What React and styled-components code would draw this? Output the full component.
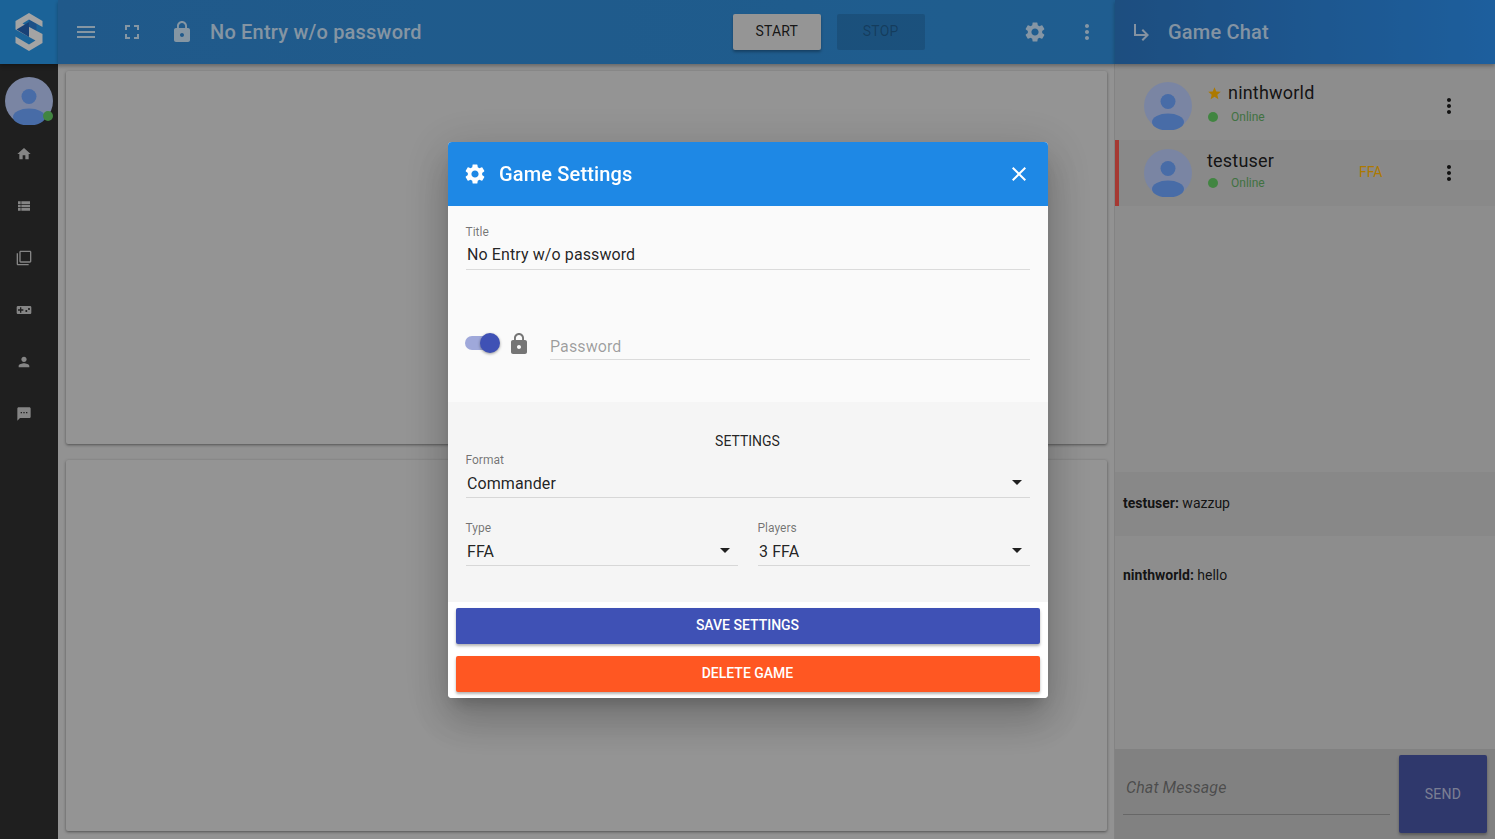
import React from "react";
import styled, { createGlobalStyle } from "styled-components";
import {
  MdMenu, MdFullscreen, MdLock, MdSettings, MdMoreVert, MdSubdirectoryArrowRight, MdClose,
  MdHome, MdViewList, MdFilterNone, MdVideogameAsset, MdPerson, MdSms, MdStar, MdArrowDropDown,
} from "react-icons/md";

const Global = createGlobalStyle`
  html, body { margin: 0; height: 100%; overflow: hidden; }
  body { font-family: Roboto, "Liberation Sans", sans-serif; background: #d7d7d7; color: rgba(0,0,0,.87); }
  * { box-sizing: border-box; }
`;

const Shell = styled.div`
  display: grid;
  grid-template-columns: 58px 1fr 380px;
  grid-template-rows: 64px 1fr;
  height: 100vh;
`;

const LogoCell = styled.div`
  background: #2993e1;
  display: flex;
  align-items: center;
  justify-content: center;
  box-shadow: 0 2px 4px rgba(0,0,0,.3);
  z-index: 2;
`;

const TopBar = styled.header`
  background: linear-gradient(90deg, #3084cc 0%, #2f88d0 70%, #2f8ad4 100%);
  color: #fff;
  display: flex;
  align-items: center;
  box-shadow: 0 2px 4px rgba(0,0,0,.3);
  z-index: 2;
`;

const ChatBar = styled.header`
  background: linear-gradient(90deg, #2b73bc 0%, #2b8ce8 100%);
  color: #fff;
  display: flex;
  align-items: center;
  padding-left: 15px;
  box-shadow: 0 2px 4px rgba(0,0,0,.3);
  z-index: 2;
`;

const BarIcon = styled.span`
  display: flex;
  align-items: center;
  justify-content: center;
  width: 24px;
  margin-left: ${p => p.$ml || 0}px;
  font-size: 24px;
  color: rgba(255,255,255,.72);
`;

const BarTitle = styled.span`
  font-size: 20px;
  font-weight: 500;
  line-height: 24px;
  letter-spacing: .2px;
  margin-left: ${p => p.$ml}px;
  color: rgba(255,255,255,.72);
`;

const ActionBtn = styled.div`
  width: 88px;
  height: 36px;
  border-radius: 2px;
  display: flex;
  align-items: center;
  justify-content: center;
  padding-bottom: 2px;
  font-size: 14px;
  font-weight: 400;
  letter-spacing: .2px;
  margin-left: ${p => p.$ml}px;
  background: ${p => (p.$off ? "rgba(0,0,0,.12)" : "#dcdcdc")};
  color: ${p => (p.$off ? "rgba(0,0,0,.26)" : "rgba(0,0,0,.87)")};
  box-shadow: ${p => (p.$off ? "none" : "0 2px 3px rgba(0,0,0,.3)")};
`;

const Rail = styled.nav`
  background: #2e2e2e;
  display: flex;
  flex-direction: column;
  align-items: center;
  padding-top: 13px;
`;

const RailAvatar = styled.div`
  position: relative;
  width: 48px;
  height: 48px;
  margin-bottom: 3px;
`;

const StatusBadge = styled.span`
  position: absolute;
  right: 0;
  bottom: 4px;
  width: 10px;
  height: 10px;
  border-radius: 50%;
  background: #61c461;
`;

const RailItem = styled.div`
  height: 52px;
  width: 100%;
  display: flex;
  align-items: center;
  justify-content: center;
  padding-right: 10px;
  font-size: 16px;
  color: #c4c4c4;
`;

const Main = styled.main`
  padding: 7px 7px 8px 8px;
  display: grid;
  grid-template-rows: 373px 1fr;
  gap: 16px;
  border-right: 1px solid rgba(0,0,0,.1);
  min-height: 0;
`;

const Card = styled.section`
  background: #dadada;
  border-radius: 2px;
  box-shadow: 0 1px 3px rgba(0,0,0,.45);
`;

const ChatSide = styled.aside`
  display: flex;
  flex-direction: column;
  min-height: 0;
  background: #d0d0d0;
`;

const UserList = styled.div`
  height: 408px;
  flex: none;
`;

const UserRow = styled.div`
  height: ${p => p.$h}px;
  display: flex;
  align-items: center;
  padding-left: ${p => (p.$active ? 25 : 29)}px;
  padding-top: ${p => p.$pt || 0}px;
  border-left: ${p => (p.$active ? "4px solid #f5544c" : "none")};
  background: ${p => (p.$active ? "#cacaca" : "transparent")};
`;

const UserInfo = styled.div`
  margin-left: 15px;
  margin-bottom: 6px;
  width: 152px;
  display: flex;
  flex-direction: column;
`;

const UserName = styled.div`
  display: flex;
  align-items: center;
  font-size: 18px;
  line-height: 22px;
  letter-spacing: .2px;
  color: rgba(0,0,0,.87);
  svg { color: #ffb300; font-size: 15px; margin-right: 6px; }
`;

const UserState = styled.div`
  display: flex;
  align-items: center;
  font-size: 12px;
  line-height: 14px;
  padding-left: 1px;
  margin-top: ${p => p.$mt}px;
  color: #5fa862;
  &::before {
    content: "";
    width: 10px;
    height: 10px;
    border-radius: 50%;
    background: #61c461;
    margin-right: 13px;
  }
`;

const FfaTag = styled.span`
  font-size: 14px;
  color: #ffb300;
  width: 24px;
  white-space: nowrap;
  margin-bottom: 2px;
`;

const RowMenu = styled.span`
  display: flex;
  font-size: 24px;
  color: rgba(0,0,0,.87);
  margin-left: ${p => p.$ml}px;
`;

const Messages = styled.div`
  flex: 1;
  min-height: 0;
`;

const Message = styled.div`
  height: ${p => p.$h}px;
  padding: ${p => p.$pt}px 8px 0;
  font-size: 14px;
  line-height: 20px;
  color: rgba(0,0,0,.87);
  background: ${p => (p.$shade ? "#c9c9c9" : "transparent")};
  b { font-weight: 700; }
`;

const Composer = styled.div`
  height: 90px;
  background: #bebebe;
  display: flex;
  padding: 6px 8px;
  gap: 9px;
`;

const ChatInput = styled.div`
  flex: 1;
  height: 60px;
  padding: 23px 3px 0;
  border-bottom: 1px solid rgba(0,0,0,.2);
  font-size: 16px;
  line-height: 20px;
  letter-spacing: .1px;
  font-style: italic;
  color: rgba(0,0,0,.42);
`;

const SendBtn = styled.div`
  width: 88px;
  height: 78px;
  border-radius: 2px;
  background: #46539f;
  color: rgba(255,255,255,.62);
  display: flex;
  align-items: center;
  justify-content: center;
  font-size: 14px;
  font-weight: 400;
  letter-spacing: .3px;
  padding-bottom: 1px;
  box-shadow: 0 2px 3px rgba(0,0,0,.3);
`;

const Backdrop = styled.div`
  position: fixed;
  inset: 0;
  z-index: 10;
  background: rgba(0,0,0,.32);
  display: flex;
  align-items: center;
  justify-content: center;
`;

const Dialog = styled.div`
  width: 600px;
  height: 556px;
  border-radius: 4px;
  overflow: hidden;
  background: #fff;
  display: flex;
  flex-direction: column;
  box-shadow: 0 11px 15px -7px rgba(0,0,0,.2), 0 24px 38px 3px rgba(0,0,0,.14), 0 9px 46px 8px rgba(0,0,0,.12);
`;

const DialogHead = styled.div`
  height: 64px;
  flex: none;
  background: #1e88e5;
  color: #fff;
  display: flex;
  align-items: center;
  padding: 0 16.5px 0 15.5px;
  font-size: 20px;
  font-weight: 500;
  letter-spacing: .15px;
  svg { font-size: 24px; }
  span { margin-left: 12px; flex: 1; }
`;

const DialogTop = styled.div`
  height: 196px;
  flex: none;
  background: #fafafa;
  padding: 19px 18px 0;
`;

const DialogMid = styled.div`
  height: 200px;
  flex: none;
  background: #f5f5f5;
  padding: 29px 18px 0;
`;

const SectionLabel = styled.div`
  text-align: center;
  font-size: 14px;
  line-height: 20px;
  height: 22px;
  color: rgba(0,0,0,.87);
`;

const FieldWrap = styled.div`
  flex: ${p => p.$flex || "none"};
  min-width: 0;
  margin-top: ${p => p.$mt || 0}px;
  margin-left: ${p => p.$ml || 0}px;
`;

const FieldLabel = styled.div`
  font-size: 12px;
  line-height: 14px;
  color: rgba(0,0,0,.54);
`;

const FieldValue = styled.div`
  height: 31px;
  display: flex;
  align-items: center;
  justify-content: space-between;
  padding: ${p => (p.$ph ? "6px 0 0 .5px" : p.$sel ? "4px 1.5px 0" : "2px 1.5px 0")};
  font-size: 16px;
  letter-spacing: .1px;
  color: ${p => (p.$ph ? "rgba(0,0,0,.38)" : "rgba(0,0,0,.87)")};
  border-bottom: 1px solid rgba(0,0,0,.12);
  svg { font-size: 24px; color: rgba(0,0,0,.87); margin: -4px -1px 0 0; }
`;

const PassRow = styled.div`
  display: flex;
  align-items: flex-end;
  margin-top: 59px;
`;

const Toggle = styled.div`
  position: relative;
  width: 26px;
  height: 14px;
  margin: 0 9px 10px -1px;
  border-radius: 7px;
  background: #9fa8da;
  flex: none;
  &::after {
    content: "";
    position: absolute;
    top: -3px;
    left: 15px;
    width: 20px;
    height: 20px;
    border-radius: 50%;
    background: #3f51b5;
    box-shadow: 0 1px 3px rgba(0,0,0,.4);
  }
`;

const LockIcon = styled.span`
  display: flex;
  font-size: 24px;
  margin: 0 0 4px 7px;
  color: #757575;
`;

const TwoCols = styled.div`
  display: flex;
  gap: 20px;
`;

const DialogFoot = styled.div`
  flex: 1;
  background: #fff;
  padding: 6px 8px;
  display: flex;
  flex-direction: column;
  gap: 12px;
`;

const WideBtn = styled.div`
  height: 36px;
  border-radius: 2px;
  padding-bottom: 2px;
  background: ${p => p.$color};
  color: #fff;
  font-size: 14px;
  font-weight: 500;
  display: flex;
  align-items: center;
  justify-content: center;
  box-shadow: 0 2px 3px rgba(0,0,0,.3);
`;

const Logo = () => (
  <svg width="28" height="38" viewBox="0 0 27 38">
    <path d="M13.5 6.5 21 10.8V17.9L13.5 13.9z" fill="#2b78c8" />
    <path d="M27 14 13.5 6.5 7 10.5 27 21V30L13.5 38 0 30V23.5L13.5 31.5 20 27.5 0 16.5V8L13.5 0 27 8z" fill="#f2f2f2" />
    <path d="M1 16.5 13.5 9V24z" fill="#2460b0" />
  </svg>
);

const Avatar = () => (
  <svg width="48" height="48" viewBox="0 0 48 48">
    <circle cx="24" cy="24" r="24" fill="#b4c5f0" />
    <circle cx="24" cy="19.5" r="7.5" fill="#6a9ff7" />
    <ellipse cx="24" cy="40" rx="16" ry="8.5" fill="#6a9ff7" />
  </svg>
);

const railIcons = [MdHome, MdViewList, MdFilterNone, MdVideogameAsset, MdPerson, MdSms];

function Field({ label, value, arrow, flex, mt }) {
  return (
    <FieldWrap $flex={flex} $mt={mt}>
      <FieldLabel>{label}</FieldLabel>
      <FieldValue $sel={arrow}>
        {value}
        {arrow && <MdArrowDropDown />}
      </FieldValue>
    </FieldWrap>
  );
}

export default function App() {
  return (
    <>
      <Global />
      <Shell>
        <LogoCell><Logo /></LogoCell>
        <TopBar>
          <BarIcon $ml={16}><MdMenu /></BarIcon>
          <BarIcon $ml={22}><MdFullscreen /></BarIcon>
          <BarIcon $ml={26}><MdLock /></BarIcon>
          <BarTitle $ml={16}>No Entry w/o password</BarTitle>
          <ActionBtn $ml={311}>START</ActionBtn>
          <ActionBtn $ml={16} $off>STOP</ActionBtn>
          <BarIcon $ml={98}><MdSettings /></BarIcon>
          <BarIcon $ml={28}><MdMoreVert /></BarIcon>
        </TopBar>
        <ChatBar>
          <BarIcon><MdSubdirectoryArrowRight /></BarIcon>
          <BarTitle $ml={14}>Game Chat</BarTitle>
        </ChatBar>
        <Rail>
          <RailAvatar><Avatar /><StatusBadge /></RailAvatar>
          {railIcons.map((Icon, i) => <RailItem key={i}><Icon /></RailItem>)}
        </Rail>
        <Main>
          <Card />
          <Card />
        </Main>
        <ChatSide>
          <UserList>
            <UserRow $h={76} $pt={8}>
              <Avatar />
              <UserInfo>
                <UserName><MdStar />ninthworld</UserName>
                <UserState $mt={6}>Online</UserState>
              </UserInfo>
              <RowMenu $ml={78}><MdMoreVert /></RowMenu>
            </UserRow>
            <UserRow $h={66} $active>
              <Avatar />
              <UserInfo>
                <UserName>testuser</UserName>
                <UserState $mt={4}>Online</UserState>
              </UserInfo>
              <FfaTag>FFA</FfaTag>
              <RowMenu $ml={54}><MdMoreVert /></RowMenu>
            </UserRow>
          </UserList>
          <Messages>
            <Message $h={64} $pt={21} $shade><b>testuser:</b> wazzup</Message>
            <Message $h={72} $pt={29}><b>ninthworld:</b> hello</Message>
          </Messages>
          <Composer>
            <ChatInput>Chat Message</ChatInput>
            <SendBtn>SEND</SendBtn>
          </Composer>
        </ChatSide>
      </Shell>
      <Backdrop>
        <Dialog>
          <DialogHead>
            <MdSettings />
            <span>Game Settings</span>
            <MdClose />
          </DialogHead>
          <DialogTop>
            <Field label="Title" value="No Entry w/o password" />
            <PassRow>
              <Toggle />
              <LockIcon><MdLock /></LockIcon>
              <FieldWrap $flex="1" $ml={19}>
                <FieldValue $ph>Password</FieldValue>
              </FieldWrap>
            </PassRow>
          </DialogTop>
          <DialogMid>
            <SectionLabel>SETTINGS</SectionLabel>
            <Field label="Format" value="Commander" arrow />
            <TwoCols>
              <Field label="Type" value="FFA" arrow flex="1" mt={23} />
              <Field label="Players" value="3 FFA" arrow flex="1" mt={23} />
            </TwoCols>
          </DialogMid>
          <DialogFoot>
            <WideBtn $color="#3f51b5">SAVE SETTINGS</WideBtn>
            <WideBtn $color="#ff5722">DELETE GAME</WideBtn>
          </DialogFoot>
        </Dialog>
      </Backdrop>
    </>
  );
}
